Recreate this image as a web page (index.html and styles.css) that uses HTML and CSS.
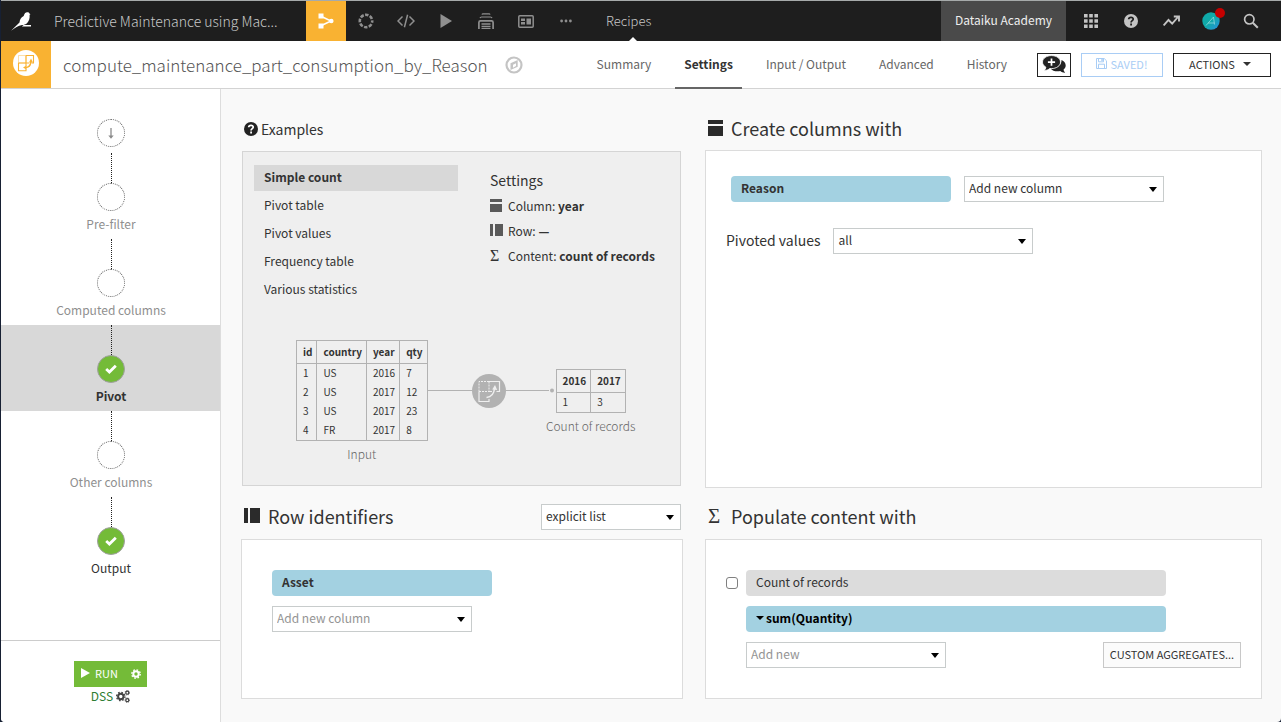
FILE: index.html
```html
<!DOCTYPE html>
<html lang="en">
<head>
<meta charset="utf-8">
<meta name="viewport" content="width=device-width, initial-scale=1">
<title>compute_maintenance_part_consumption_by_Reason</title>
<link rel="stylesheet" href="styles.css">
</head>
<body>
<div class="app">
  <header class="topbar">
    <a class="logo" href="#" aria-label="Home">
      <svg width="22" height="20" viewBox="0 0 22 20"><path fill="#fff" d="M0 19.800 8.500 11.500C8.800 8.800 9.800 6.600 12.700 5 13.300 2.700 14.400 1.300 16.200 1.300c1.200 0 2 .5 2.400 1.400l.9.600-.9.500c.3 3.400-.5 6.200-2.400 8.200-1.500 1.500-3.200 2.100-5.200 2.100-3.700.4-7 2.800-11 5.700zM12.700 13.900H20v1.600h-9.200z"/></svg>
    </a>
    <a class="project" href="#">Predictive Maintenance using Mac...</a>
    <nav class="nav-icons" aria-label="Project">
      <a class="nav-icon nav-icon-on" href="#" aria-label="Flow"><svg width="16" height="16" viewBox="0 0 16 16"><path d="M3 3.200 13 8 3 12.800" fill="none" stroke="#fff" stroke-width="1.500"/><path fill="#fff" d="M.5.5h5v5h-5zM.5 10.500h5v5h-5z"/><circle cx="13.300" cy="8" r="2.300" fill="#fff"/></svg></a>
      <a class="nav-icon" href="#" aria-label="Analyses"><svg width="16" height="16" viewBox="0 0 16 16"><circle cx="8" cy="8" r="6.200" fill="none" stroke="currentColor" stroke-width="2.600" stroke-dasharray="3.470 1.400" stroke-dashoffset="1.700"/></svg></a>
      <a class="nav-icon" href="#" aria-label="Code"><svg width="18" height="14" viewBox="0 0 18 14"><path d="M5.500 2.500 1 7l4.500 4.500M12.500 2.500 17 7l-4.500 4.500M10.600.8 7.400 13.200" fill="none" stroke="currentColor" stroke-width="1.500"/></svg></a>
      <a class="nav-icon" href="#" aria-label="Jobs"><svg width="12" height="14" viewBox="0 0 12 14"><path fill="currentColor" d="M.5 0 12 7 .5 14z"/></svg></a>
      <a class="nav-icon" href="#" aria-label="Automation"><svg width="16" height="16" viewBox="0 0 16 16" fill="none" stroke="currentColor"><path stroke-width="1.200" d="M4 1.600Q4.200.8 5 .8h6q.8 0 1 .8M2 5.200Q2.300 4 3.500 4h9q1.200 0 1.500 1.200"/><path stroke-width="1.700" d="M.9 16V9.500q0-1.600 1.600-1.600h11q1.600 0 1.600 1.600V16M3.500 11h9M3.500 13.500h9M3.500 15.800h9"/></svg></a>
      <a class="nav-icon" href="#" aria-label="Dashboards"><svg width="16" height="13" viewBox="0 0 16 13"><rect x=".8" y=".8" width="14.400" height="11.400" rx="1" fill="none" stroke="currentColor" stroke-width="1.500"/><path fill="currentColor" d="M3 3.500h4v2.500H3zM3 7h4v2.500H3zM8.500 3.500H13v6H8.500z"/></svg></a>
      <a class="nav-icon" href="#" aria-label="More"><svg width="12" height="4" viewBox="0 0 12 4" fill="currentColor"><circle cx="1.600" cy="2" r="1.400"/><circle cx="6" cy="2" r="1.400"/><circle cx="10.400" cy="2" r="1.400"/></svg></a>
    </nav>
    <a class="section-name" href="#">Recipes</a>
    <div class="topbar-right">
      <a class="academy" href="#">Dataiku Academy</a>
      <a class="nav-icon light" href="#" aria-label="Applications"><svg width="14" height="14" viewBox="0 0 14 14"><path fill="currentColor" d="M0 0h3.600v3.600H0zM5.200 0h3.600v3.600H5.200zM10.400 0H14v3.600h-3.600zM0 5.200h3.600v3.600H0zM5.200 5.200h3.600v3.600H5.200zM10.400 5.200H14v3.600h-3.600zM0 10.400h3.600V14H0zM5.200 10.400h3.600V14H5.200zM10.400 10.400H14V14h-3.600z"/></svg></a>
      <a class="nav-icon light" href="#" aria-label="Help"><svg width="14" height="14" viewBox="0 0 14 14"><circle cx="7" cy="7" r="7" fill="currentColor"/><path d="M4.700 5.300c.2-2.700 4.700-2.500 4.500 0C9.100 6.700 7.100 6.700 7.100 8.500M7.100 9.600v1.800" fill="none" stroke="#1e1e1e" stroke-width="1.800"/></svg></a>
      <a class="nav-icon light" href="#" aria-label="Activity"><svg width="17" height="12" viewBox="0 0 17 12"><path d="M.7 10.500 5.500 5l3.700 3.700L15 2M10.800 1.500H16v5" fill="none" stroke="currentColor" stroke-width="1.900"/></svg></a>
      <a class="nav-icon light" href="#" aria-label="Profile"><span class="avatar"><svg width="18" height="18" viewBox="0 0 18 18"><defs><linearGradient id="av" x1="0" y1="0" x2="1" y2="1"><stop offset=".5" stop-color="#0fa9a8"/><stop offset="1" stop-color="#2b8fe0"/></linearGradient></defs><circle cx="9" cy="9" r="8.700" fill="url(#av)"/><path d="M4 13.500 11.500 5l1 7.500M6 11h6.500" fill="none" stroke="#8fd8dc" stroke-width=".8"/></svg><span class="alert-dot"></span></span></a>
      <a class="nav-icon light" href="#" aria-label="Search"><svg width="16" height="16" viewBox="0 0 16 16"><circle cx="6.300" cy="6.300" r="4.700" fill="none" stroke="currentColor" stroke-width="1.700"/><path d="m9.800 9.800 5 5" stroke="currentColor" stroke-width="2"/></svg></a>
    </div>
  </header>

  <div class="recipe-bar">
    <span class="recipe-icon"><svg width="26" height="26" viewBox="0 0 26 26"><circle cx="13" cy="13" r="13" fill="#fff"/><g fill="none" stroke="#f9b232"><path stroke-width=".7" opacity=".6" d="M5.500 13V5.500h7.500M13 5.500V13H5.500"/><path stroke-width="1.100" d="M13 5.500h7.500V13H18.500M16 13H13V5.500M5.500 13v7.800H13V18.500M5.500 13H13v3"/><path stroke-width="1.500" d="M12.500 17.500c3 0 5-2 5.300-5.500"/></g><path fill="#f9b232" d="m18 8.500 2 4h-4zM10 17.500l3.500-2v4z"/></svg></span>
    <h1 class="recipe-name">compute_maintenance_part_consumption_by_Reason</h1>
    <a class="compass" href="#" aria-label="Navigate"><svg width="18" height="18" viewBox="0 0 18 18"><circle cx="9" cy="9" r="7.500" fill="none" stroke="#c4c4c4" stroke-width="2.200"/><path fill="#c4c4c4" fill-rule="evenodd" d="M12.700 4v6.800L5.500 14V7.300zM11 7.200 8 8.700v3L11 10z"/></svg></a>
    <nav class="tabs" aria-label="Recipe">
      <a class="tab" href="#">Summary</a>
      <a class="tab tab-on" href="#">Settings</a>
      <a class="tab" href="#">Input / Output</a>
      <a class="tab" href="#">Advanced</a>
      <a class="tab" href="#">History</a>
    </nav>
    <div class="actions">
      <button class="btn btn-discuss" type="button" aria-label="Discussions"><svg width="24" height="20" viewBox="0 0 24 20"><path fill="#222" d="M19.500 5c2.700 1.200 4.200 3.200 4.200 5.400 0 1.700-.8 3.100-2.200 4.300.2 1.200.8 2.100 1.700 3-2 .1-3.600-.5-4.900-1.600-4 .8-8-.2-9.700-2.600C15 13.600 19.800 10 19.500 5z"/><path fill="#222" stroke="#fff" stroke-width=".8" d="M9.500.6c5 0 9 2.900 9 6.500s-4 6.500-9 6.500l-1.800-.1C6.300 14.800 4.400 15.500 2.200 15.400c1-.9 1.600-1.900 1.700-3.200C1.800 11 .5 9.200.5 7.100.5 3.500 4.500.6 9.500.6z"/><path stroke="#fff" stroke-width="1.700" d="M9.500 3.500v7.200M5.900 7.100h7.200"/></svg></button>
      <button class="btn btn-saved" type="button"><svg width="11" height="11" viewBox="0 0 11 11"><path fill="none" stroke="currentColor" d="M.5.500h7.700l2.300 2.300v7.700H.5zM2.500.5v3.300h5V.5M2.500 10.500V6.200h6v4.300"/><path fill="currentColor" d="M5.300.5h1.500v2.500H5.300z"/></svg>SAVED!</button>
      <button class="btn btn-actions" type="button">ACTIONS<i class="caret"></i></button>
    </div>
  </div>

  <div class="body">
    <aside class="sidebar">
      <ol class="steps">
        <li class="step step-start"><span class="circle"><svg width="6" height="11" viewBox="0 0 6 11"><path d="M3 0v9" stroke="#8a8a8a" stroke-width="1.300"/><path fill="#8a8a8a" d="M.3 7.500h5.400L3 10.800z"/></svg></span></li>
        <li class="step"><span class="circle"></span><a class="step-name" href="#">Pre-filter</a></li>
        <li class="step"><span class="circle"></span><a class="step-name" href="#">Computed columns</a></li>
        <li class="step step-on"><span class="circle done"><svg width="12" height="10" viewBox="0 0 12 10"><path d="m1.200 5 3.200 3L10.800 1.700" fill="none" stroke="#fff" stroke-width="2.800"/></svg></span><a class="step-name" href="#">Pivot</a></li>
        <li class="step"><span class="circle"></span><a class="step-name" href="#">Other columns</a></li>
        <li class="step step-ready"><span class="circle done"><svg width="12" height="10" viewBox="0 0 12 10"><path d="m1.200 5 3.200 3L10.800 1.700" fill="none" stroke="#fff" stroke-width="2.800"/></svg></span><a class="step-name" href="#">Output</a></li>
      </ol>
      <div class="run-area">
        <div class="run-group">
          <button class="run" type="button"><svg width="9" height="10" viewBox="0 0 9 10"><path fill="#fff" d="M0 0l9 5-9 5z"/></svg>RUN</button>
          <button class="run-options" type="button" aria-label="Run options"><svg width="10" height="10" viewBox="0 0 10 10"><circle cx="5" cy="5" r="2.700" fill="none" stroke="#fff" stroke-width="2"/><circle cx="5" cy="5" r="4.200" fill="none" stroke="#fff" stroke-width="1.400" stroke-dasharray="1.650 1.650"/></svg></button>
        </div>
        <a class="engine" href="#">DSS <svg width="14" height="13" viewBox="0 0 14 13" fill="none" stroke="#444"><circle cx="4.800" cy="6.500" r="2.700" stroke-width="2"/><circle cx="4.800" cy="6.500" r="4.200" stroke-width="1.300" stroke-dasharray="1.650 1.650"/><circle cx="11.300" cy="2.700" r="1.500" stroke-width="1.300"/><circle cx="11.300" cy="2.700" r="2.300" stroke-width=".8" stroke-dasharray=".9 .9"/><circle cx="11.300" cy="10.200" r="1.500" stroke-width="1.300"/><circle cx="11.300" cy="10.200" r="2.300" stroke-width=".8" stroke-dasharray=".9 .9"/></svg></a>
      </div>
    </aside>

    <main class="main">
      <section class="block">
        <h2 class="heading heading-small"><svg width="14" height="14" viewBox="0 0 14 14"><circle cx="7" cy="7" r="7" fill="#222"/><path d="M4.700 5.300c.2-2.700 4.700-2.500 4.500 0C9.100 6.700 7.100 6.700 7.100 8.500M7.100 9.600v1.800" fill="none" stroke="#fff" stroke-width="1.800"/></svg>Examples</h2>
        <div class="panel examples">
          <div class="examples-top">
            <ul class="example-list">
              <li><a class="example example-on" href="#">Simple count</a></li>
              <li><a class="example" href="#">Pivot table</a></li>
              <li><a class="example" href="#">Pivot values</a></li>
              <li><a class="example" href="#">Frequency table</a></li>
              <li><a class="example" href="#">Various statistics</a></li>
            </ul>
            <div class="example-settings">
              <h3 class="settings-title">Settings</h3>
              <p class="setting"><svg width="13" height="13" viewBox="0 0 13 13"><path fill="#5a5a5a" d="M0 0h12v3H0zM0 5h12v8H0z"/></svg><span>Column: <b>year</b></span></p>
              <p class="setting"><svg width="13" height="13" viewBox="0 0 13 13"><path fill="#5a5a5a" d="M0 0h3v12H0zM5 0h8v12H5z"/></svg><span>Row: <b>—</b></span></p>
              <p class="setting"><span class="sigma sigma-small">Σ</span><span>Content: <b>count of records</b></span></p>
            </div>
          </div>
          <div class="diagram">
            <figure class="sample">
              <table class="data">
                <thead><tr><th>id</th><th>country</th><th>year</th><th>qty</th></tr></thead>
                <tbody>
                  <tr><td>1</td><td>US</td><td>2016</td><td>7</td></tr>
                  <tr><td>2</td><td>US</td><td>2017</td><td>12</td></tr>
                  <tr><td>3</td><td>US</td><td>2017</td><td>23</td></tr>
                  <tr><td>4</td><td>FR</td><td>2017</td><td>8</td></tr>
                </tbody>
              </table>
              <figcaption>Input</figcaption>
            </figure>
            <svg class="link" width="128" height="34" viewBox="0 0 128 34"><path d="M0 16.500h121" stroke="#b2b2b2"/><circle cx="61" cy="17" r="17" fill="#b2b2b2"/><circle cx="124" cy="16.500" r="2" fill="#b2b2b2"/><g fill="none" stroke="#efefef"><path stroke-dasharray="2 1" d="M51 17.500V7.500h10M61 7.500V17.500H51"/><path stroke-width="1.200" d="M61 7.500h10.500v10H68.500M51 17.500v10h10V25M61 17.500h3"/><path stroke-width="1.500" d="M58.500 23.500c4.500-.5 7.500-3.500 8-9"/></g><path fill="#efefef" d="m67 11 2.200 5-5-.5z"/></svg>
            <figure class="sample">
              <table class="data">
                <thead><tr><th>2016</th><th>2017</th></tr></thead>
                <tbody><tr><td>1</td><td>3</td></tr></tbody>
              </table>
              <figcaption>Count of records</figcaption>
            </figure>
          </div>
        </div>
      </section>

      <section class="block">
        <h2 class="heading"><svg width="15" height="16" viewBox="0 0 15 16"><path fill="#2b2b2b" d="M0 0h15v4H0zM0 6h15v10H0z"/></svg>Create columns with</h2>
        <div class="panel create">
          <div class="create-row create-keys">
            <span class="pill pill-key">Reason</span>
            <span class="select"><select aria-label="Add new column"><option>Add new column</option></select></span>
          </div>
          <div class="create-row">
            <label class="field-label" for="pivoted">Pivoted values</label>
            <span class="select"><select id="pivoted"><option>all</option></select></span>
          </div>
        </div>
      </section>

      <section class="block">
        <div class="heading-row">
          <h2 class="heading"><svg width="16" height="16" viewBox="0 0 16 16"><path fill="#2b2b2b" d="M0 0h4v15H0zM6 0h10v15H6z"/></svg>Row identifiers</h2>
          <span class="select select-mode"><select aria-label="Row identifiers mode"><option>explicit list</option></select></span>
        </div>
        <div class="panel rows">
          <span class="pill pill-key">Asset</span>
          <span class="select muted"><select aria-label="Add row identifier"><option>Add new column</option></select></span>
        </div>
      </section>

      <section class="block">
        <div class="heading-row">
          <h2 class="heading"><span class="sigma">Σ</span>Populate content with</h2>
        </div>
        <div class="panel populate">
          <input class="check" type="checkbox" id="count">
          <label class="pill pill-off" for="count">Count of records</label>
          <button class="pill pill-agg" type="button"><i class="caret"></i>sum(Quantity)</button>
          <div class="populate-foot">
            <span class="select muted"><select aria-label="Add new aggregate"><option>Add new</option></select></span>
            <button class="btn btn-custom" type="button">CUSTOM AGGREGATES...</button>
          </div>
        </div>
      </section>
    </main>
  </div>
</div>
</body>
</html>
```
FILE: styles.css
```css
* { box-sizing: border-box; }

body {
  margin: 0;
  background: #172033;
  color: #333;
  font-family: "Noto Sans CJK SC", "Open Sans", sans-serif;
  font-size: 12px;
  line-height: 20px;
}

h1, h2, h3, p, ul, ol, figure { margin: 0; padding: 0; font-weight: 400; }
ul, ol { list-style: none; }
a { color: inherit; text-decoration: none; }
svg { display: block; flex: none; }
button, select, input { margin: 0; font: inherit; color: inherit; }
button { cursor: pointer; }

.app {
  display: flex;
  flex-direction: column;
  min-height: 100vh;
  margin-left: 1px;
  background: #f9f9f9;
  border-top: 1px solid #a6aaaa;
  border-radius: 0 0 4px 4px;
  overflow: hidden;
}

/* Top bar */
.topbar {
  display: flex;
  height: 40px;
  background: #1e1e1e;
  color: #ccc;
}
.logo { display: flex; align-items: center; width: 53px; padding-left: 10px; }
.project {
  width: 252px;
  white-space: nowrap;
  font-size: 14px;
  font-weight: 300;
  line-height: 40px;
  color: #c8c8c8;
}
.nav-icons { display: flex; }
.nav-icon {
  display: flex;
  align-items: center;
  justify-content: center;
  width: 40px;
  color: #8f8f8f;
}
.nav-icon-on { background: #f9b232; }
.light { color: #c4c4c4; }
.section-name {
  position: relative;
  margin-left: 20px;
  font-size: 13px;
  font-weight: 300;
  line-height: 40px;
  color: #c8c8c8;
}
.section-name::after {
  content: "";
  position: absolute;
  left: 50%;
  bottom: 0;
  border: 4px solid transparent;
  border-top: 0;
  border-bottom-color: #fff;
}
.topbar-right { display: flex; margin-left: auto; padding-right: 10px; }
.academy {
  width: 125px;
  margin-right: 5px;
  background: #4a4a4a;
  color: #eee;
  text-align: center;
  line-height: 38px;
}
.avatar { position: relative; }
.alert-dot {
  position: absolute;
  top: -4px;
  right: -5px;
  width: 10px;
  height: 10px;
  border-radius: 50%;
  background: #c40000;
}

/* Recipe bar */
.recipe-bar {
  display: flex;
  align-items: center;
  height: 48px;
  padding-right: 10px;
  background: #fff;
  border-bottom: 1px solid #d3d3d3;
}
.recipe-icon {
  display: flex;
  justify-content: center;
  align-self: stretch;
  width: 50px;
  padding-top: 9px;
  background: #f9b232;
}
.recipe-name {
  margin-left: 12px;
  font-size: 17px;
  font-weight: 300;
  line-height: 46px;
  color: #555;
  white-space: nowrap;
}
.compass { margin-left: 17px; }
.tabs { display: flex; gap: 15px; margin-left: auto; align-self: stretch; }
.tab {
  padding: 0 9px;
  line-height: 46px;
  border-bottom: 2px solid transparent;
  margin-bottom: -1px;
  color: #666;
  white-space: nowrap;
}
.tab-on { color: #333; font-weight: 700; border-color: #666; }
.actions { display: flex; gap: 10px; margin-left: 21px; }
.btn {
  display: flex;
  align-items: center;
  justify-content: center;
  height: 24px;
  padding: 0 0 2px;
  background: #fff;
  border: 1px solid #222;
  font-size: 11px;
}
.btn-discuss { width: 34px; padding: 0; }
.btn-saved { width: 82px; gap: 3px; border-color: #a9cdf5; color: #a9cdf5; }
.btn-actions { width: 98px; gap: 8px; padding-right: 4px; }
.caret {
  border: 4px solid transparent;
  border-top-color: currentColor;
  border-bottom: 0;
}

/* Sidebar */
.body { display: flex; flex: 1; }
.sidebar {
  display: flex;
  flex-direction: column;
  flex: none;
  width: 220px;
  background: #fff;
  border-right: 1px solid #ddd;
}
.steps { padding-top: 30px; }
.step {
  display: flex;
  flex-direction: column;
  align-items: center;
  height: 86px;
  padding-left: 1px;
  color: #8f8f8f;
}
.step::before {
  content: "";
  height: 30px;
  border-left: 1px dotted #222;
}
.step-start { height: 34px; }
.step-start::before { display: none; }
.circle {
  display: flex;
  align-items: center;
  justify-content: center;
  width: 28px;
  height: 28px;
  border: 1px dotted #666;
  border-radius: 50%;
  background: #fff;
}
.done { border: 1px solid #a0a0a0; background: #74bb38; }
.step-name { margin-top: 3px; }
.step-on { background: #d8d8d8; color: #333; font-weight: 700; }
.step-ready { color: #333; }
.run-area {
  display: flex;
  flex-direction: column;
  align-items: center;
  height: 82px;
  margin-top: auto;
  padding-top: 20px;
  border-top: 1px solid #ccc;
}
.run-group { display: flex; height: 26px; background: #74bb38; }
.run, .run-options {
  display: flex;
  align-items: center;
  padding: 0;
  background: none;
  border: 0;
  color: #fff;
  font-size: 11px;
}
.run { gap: 5px; padding: 0 0 2px 7px; width: 50px; }
.run-options { justify-content: center; width: 23px; }
.engine { display: flex; align-items: center; gap: 3px; line-height: 18px; color: #2e7d32; }

/* Main area */
.main {
  display: grid;
  grid-template-columns: minmax(0, 442fr) minmax(0, 557fr);
  grid-template-rows: 1fr auto;
  column-gap: 22px;
  flex: 1;
  padding: 19px 19px 23px 20px;
}
.block { display: flex; flex-direction: column; }
.heading {
  display: flex;
  align-items: center;
  gap: 8px;
  height: 42px;
  padding: 0 0 2px 3px;
  font-size: 18px;
  line-height: 24px;
}
.heading-small { gap: 3px; padding-bottom: 1px; font-size: 14px; }
.heading-row {
  display: flex;
  align-items: center;
  justify-content: space-between;
  height: 51px;
  padding: 7px 2px 0 0;
}
.sigma {
  width: 15px;
  font-family: "Liberation Serif", serif;
  font-size: 21px;
}
.sigma-small { width: 13px; font-size: 16px; }
.panel {
  flex: 1;
  background: #fff;
  border: 1px solid #dcdcdc;
}

/* Examples */
.examples { margin: 1px 2px 2px 1px; padding: 13px 11px; background: #efefef; border-color: #d5d5d5; }
.examples-top { display: flex; gap: 32px; }
.example-list { display: grid; gap: 2px; width: 204px; }
.example { display: block; padding: 0 10px 2px; line-height: 24px; }
.example-on { background: #d8d8d8; font-weight: 700; }
.settings-title { padding-bottom: 2px; margin-top: 4px; font-size: 14px; line-height: 22px; }
.setting { display: flex; align-items: center; gap: 5px; line-height: 25px; }
.diagram { display: flex; align-items: center; padding: 11px 0 0 42px; }
.sample { padding-top: 26px; }
.sample figcaption {
  height: 26px;
  margin: 0 -20px;
  padding-top: 3px;
  text-align: center;
  font-weight: 300;
  color: #666;
}
.data {
  border-collapse: collapse;
  border-bottom: 1px solid #b2b2b2;
  font-size: 10px;
}
.data th, .data td {
  padding: 0 4px 1px 6px;
  text-align: left;
  border: solid #b2b2b2;
  border-width: 0 1px;
  line-height: 18px;
}
.data th { border-width: 1px; line-height: 21px; }

/* Controls */
.select { position: relative; display: block; width: 200px; }
.select::after {
  content: "";
  position: absolute;
  top: 11px;
  right: 7px;
  border: 4px solid transparent;
  border-top: 5px solid #000;
  border-bottom: 0;
  pointer-events: none;
}
.select select {
  display: block;
  width: 100%;
  height: 26px;
  padding: 0 20px 2px 4px;
  appearance: none;
  background: #fff;
  border: 1px solid #c8cccc;
  border-radius: 0;
}
.select-mode { width: 140px; }
.muted select { color: #949494; }
.pill {
  display: flex;
  align-items: center;
  height: 26px;
  padding: 0 10px 2px;
  border: 0;
  border-radius: 4px;
  background: #a3d1e1;
}
.pill-key { width: 220px; font-weight: 700; }
.pill-off { width: 420px; background: #dcdcdc; }
.pill-agg { gap: 2px; width: 420px; color: #000; font-weight: 700; grid-column: 2; }

.create { padding: 25px 20px; }
.create-row { display: flex; align-items: center; gap: 13px; }
.create-keys { margin-bottom: 26px; padding-left: 5px; }
.field-label { padding-bottom: 2px; font-size: 14px; }
.rows { display: grid; align-content: start; gap: 10px; min-height: 160px; padding: 30px; }
.populate {
  display: grid;
  grid-template-columns: 12px 1fr;
  align-content: start;
  align-items: center;
  gap: 10px 8px;
  padding: 30px 20px;
}
.check {
  width: 12px;
  height: 12px;
  appearance: none;
  background: #fff;
  border: 1px solid #808080;
  border-radius: 3px;
}
.populate-foot { grid-column: 2; display: flex; justify-content: space-between; }
.btn-custom { width: 138px; height: 26px; background: #fbfbfb; border-color: #c8c8c8; }
```
